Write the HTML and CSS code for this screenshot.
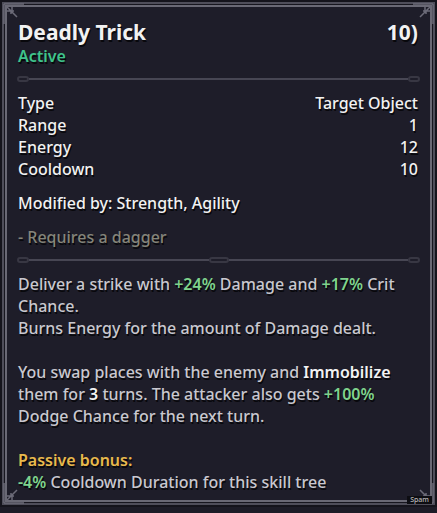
FILE: index.html
```html
<!DOCTYPE html>
<html lang="en">
<head>
    <meta charset="UTF-8">
    <meta name="viewport" content="width=device-width, initial-scale=1.0">
    <title>Deadly Trick</title>
    <link rel="stylesheet" href="styles.css">
</head>
<body>

<div class="tooltip">
    <!-- corner ornaments -->
    <svg class="corner tl" width="24" height="24" viewBox="0 0 24 24"><path d="M2 2h20M2 2v20M5 5l10 10M5 9h5v-4M9 12v-3h3" fill="none" stroke="#6c6b78" stroke-width="1.5"/></svg>
    <svg class="corner tr" width="24" height="24" viewBox="0 0 24 24"><path d="M2 2h20M2 2v20M5 5l10 10M5 9h5v-4M9 12v-3h3" fill="none" stroke="#6c6b78" stroke-width="1.5"/></svg>
    <svg class="corner bl" width="24" height="24" viewBox="0 0 24 24"><path d="M2 2h20M2 2v20M5 5l10 10M5 9h5v-4M9 12v-3h3" fill="none" stroke="#6c6b78" stroke-width="1.5"/></svg>
    <svg class="corner br" width="24" height="24" viewBox="0 0 24 24"><path d="M2 2h20M2 2v20M5 5l10 10M5 9h5v-4M9 12v-3h3" fill="none" stroke="#6c6b78" stroke-width="1.5"/></svg>

    <div class="head">
        <h2>Deadly Trick</h2>
        <span class="level">10)</span>
    </div>
    <div class="kind">Active</div>

    <div class="sep">
        <span class="knot"></span><span class="line"></span><span class="knot"></span>
    </div>

    <div class="stats">
        <div class="row"><span>Type</span><span>Target Object</span></div>
        <div class="row"><span>Range</span><span>1</span></div>
        <div class="row"><span>Energy</span><span>12</span></div>
        <div class="row"><span>Cooldown</span><span>10</span></div>
    </div>

    <div class="mod">Modified by: Strength, Agility</div>
    <div class="req">- Requires a dagger</div>

    <div class="sep">
        <span class="knot"></span><span class="line"></span><span class="knot mid"></span><span class="line"></span><span class="knot"></span>
    </div>

    <div class="desc">
        <p>Deliver a strike with <span class="up">+24%</span> Damage and <span class="up">+17%</span> Crit Chance.<br>
        Burns Energy for the amount of Damage dealt.</p>
        <p>You swap places with the enemy and <span class="hl">Immobilize</span> them for <span class="hl">3</span> turns. The attacker also gets <span class="up">+100%</span> Dodge Chance for the next turn.</p>
        <p><span class="passive">Passive bonus:</span><br>
        <span class="up">-4%</span> Cooldown Duration for this skill tree</p>
    </div>

    <span class="tag">Spam</span>
</div>

</body>
</html>
```

FILE: styles.css
```css
* {
    box-sizing: border-box;
}
html, body {
    margin: 0;
    height: 100%;
    overflow: hidden;
}
body {
    background-color: #1d1c27;
    font-family: 'Noto Sans', sans-serif;
    color: #f2f2f2;
}
.tooltip {
    position: relative;
    height: 507px;
    background-color: #1e1d29;
    border: 2px solid #15141c;
    box-shadow: inset 0 0 0 2px #4f4e5a, inset 0 0 0 3px #17161f, inset 0 0 0 5px #6a6975;
    padding: 17px 17px 0 16px;
    font-size: 16px;
    font-weight: 500;
    line-height: 22px;
    text-shadow: 1px 2px 0 #08080c;
}
.corner {
    position: absolute;
}
.corner.tl { top: 0; left: 0; }
.corner.tr { top: 0; right: 0; transform: scaleX(-1); }
.corner.bl { bottom: 0; left: 0; transform: scaleY(-1); }
.corner.br { bottom: 0; right: 0; transform: scale(-1, -1); }
.head {
    display: flex;
    justify-content: space-between;
    align-items: center;
    height: 26px;
}
.head h2 {
    margin: 0;
    font-size: 21px;
    font-weight: 700;
}
.level {
    font-size: 21px;
    font-weight: 700;
}
.kind {
    color: #3fc48c;
    font-weight: 600;
}
.sep {
    display: flex;
    align-items: center;
    height: 2px;
    margin: 11px -2px 12px -1px;
}
.sep .line {
    flex: 1;
    height: 2px;
    background-color: #474653;
}
.sep .knot {
    width: 12px;
    height: 6px;
    border: 2px solid #383743;
    border-radius: 3px;
}
.sep .knot.mid {
    width: 20px;
}
.stats .row {
    display: flex;
    justify-content: space-between;
}
.mod {
    margin-top: 12px;
}
.req {
    margin-top: 12px;
    color: #85857a;
}
.desc {
    color: #c9c8cf;
}
.desc p {
    margin: 0 0 22px;
}
.up {
    color: #7fd38d;
    font-weight: 600;
}
.hl {
    color: #f2f2f2;
    font-weight: 600;
}
.passive {
    color: #e8b94c;
    font-weight: 600;
}
.tag {
    position: absolute;
    right: 3px;
    bottom: 1px;
    font-size: 7px;
    line-height: 8px;
    background-color: #0d0d12;
    color: #bbb;
    padding: 0 3px;
    text-shadow: none;
}
```
